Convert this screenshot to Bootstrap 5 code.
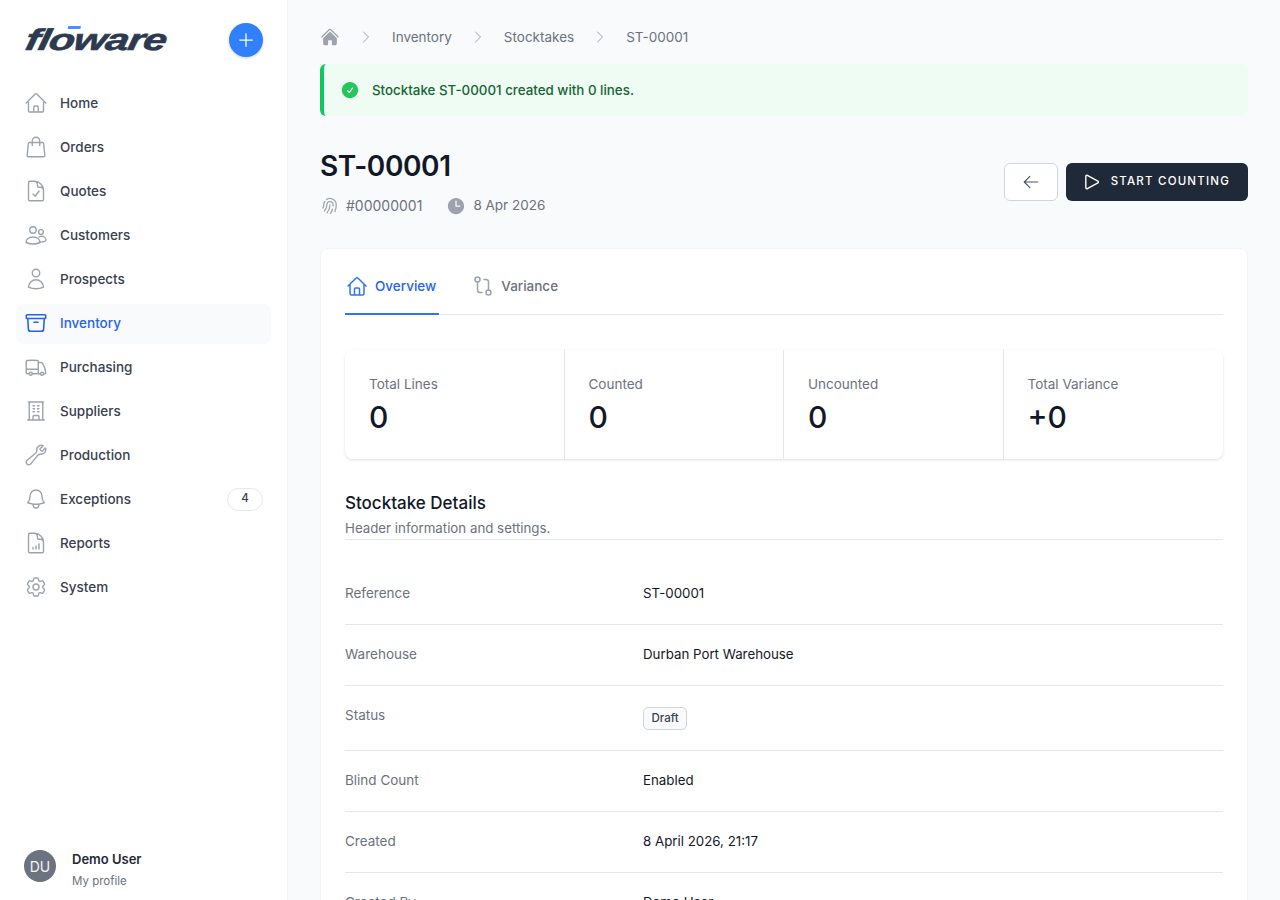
<!DOCTYPE html>
<html lang="en">
<head>
  <meta charset="UTF-8" />
  <title>ST-00001</title>
  <link href="https://cdn.jsdelivr.net/npm/bootstrap@5.3.3/dist/css/bootstrap.min.css" rel="stylesheet">
  <style>
    body { font-family: Inter, "Liberation Sans", sans-serif; font-size: 14px; color: #111827; background: #f9fafb; }
    .ico { fill: none; stroke: currentColor; stroke-width: 1.5; stroke-linecap: round; stroke-linejoin: round; flex: none; }
    .ico-solid { fill: currentColor; stroke: none; flex: none; }
    .side { width: 288px; background: #fff; border-right: 1px solid #f3f4f6; flex: none; padding: 16px 16px 0; }
    .brand-row { height: 48px; padding: 0 8px; }
    .brand { position: relative; margin-left: 2px; font-family: "Liberation Sans", sans-serif; font-weight: 700; font-style: italic; font-size: 30px; color: #2c3a4f; letter-spacing: -.8px; transform: scaleX(1.41) skewX(-8deg); transform-origin: left center; line-height: 1; -webkit-text-stroke: .6px #2c3a4f; }
    .brand-bar { position: absolute; left: 28px; top: 1px; width: 9px; height: 2.5px; background: #4f8ff7; }
    .add-btn { width: 34px; height: 34px; background: #2f80fa; color: #fff; box-shadow: 0 1px 3px rgba(0,0,0,.2); border: 0; }
    .side-nav { margin-top: 20px; gap: 4px; }
    .side-link { height: 40px; padding: 0 8px 2px; border-radius: 8px; color: #374151; font-weight: 500; font-size: 13.5px; gap: 12px; text-decoration: none; }
    .side-link svg { color: #9ca3af; width: 24px; height: 24px; stroke-width: 1.4; }
    .side-link.on { background: #f9fafb; color: #2563eb; }
    .side-link.on svg { color: #2563eb; stroke-width: 1.6; }
    .count { width: 36px; height: 23px; border: 1px solid #e5e7eb; border-radius: 12px; font-size: 11.5px; color: #374151; }
    .profile { padding: 0 8px 16px; gap: 16px; height: 48px; margin-bottom: 2px; }
    .avatar { width: 32px; height: 32px; background: #6b7280; color: #f3f4f6; font-size: 14px; }
    .who-box { padding-top: 8px; }
    .who { font-size: 13px; font-weight: 600; color: #1f2937; line-height: 20px; }
    .who-sub { font-size: 11.5px; color: #6b7280; line-height: 20px; margin-top: 2px; }
    .main-pane { padding: 24px 32px 0; min-width: 0; }
    .crumbs { height: 26px; color: #6b7280; font-size: 13.5px; gap: 18px; margin-bottom: 14px; }
    .crumbs svg { color: #9ca3af; }
    .flash { height: 52px; background: #effcf3; border-left: 4px solid #10c85a; border-radius: 6px; padding-left: 16px; gap: 12px; color: #166534; font-size: 13.35px; font-weight: 500; margin-bottom: 32px; }
    .flash svg { color: #22c55e; }
    .doc-title { font-size: 28px; font-weight: 600; line-height: 36px; letter-spacing: -.4px; color: #111827; margin: 0 0 11px; }
    .meta { color: #6b7280; font-size: 13.5px; gap: 7px; }
    .meta svg { color: #9ca3af; }
    .meta-id { font-size: 14px; margin-left: -1px; }
    .btn-back { width: 54px; height: 38px; background: #fff; border: 1px solid #d1d5db; border-radius: 6px; color: #4b5563; padding: 0; }
    .btn-start { height: 38px; background: #1f2937; color: #fff; border: 0; border-radius: 6px; font-size: 11.5px; font-weight: 500; letter-spacing: 1.2px; padding: 0 18px 0 15px; gap: 8px; }
    .btn-start:hover { background: #1f2937; color: #fff; }
    .sheet { margin-top: 32px; background: #fff; border: 1px solid #f3f4f6; border-radius: 8px; padding: 0 24px; box-shadow: 0 1px 1px rgba(0,0,0,.01); }
    .tabs { border-bottom: 1px solid #e5e7eb; gap: 32px; height: 66px; }
    .tab-item { height: 66px; margin-bottom: -1px; padding: 8px 3px 0 0; gap: 6px; color: #6b7280; font-size: 13.5px; font-weight: 500; }
    .tab-item svg { color: #9ca3af; }
    .tab-item.on { color: #2563eb; border-bottom: 2px solid #2f74f0; padding-top: 10px; }
    .tab-item.on svg { color: #2f74f0; }
    .stats { margin-top: 35px; border-radius: 8px; box-shadow: 0 1px 3px rgba(0,0,0,.12); height: 109px; }
    .stat { padding: 24px 24px 0; border-right: 1px solid #e5e7eb; }
    .stat:last-child { border-right: 0; }
    .stat-label { font-size: 13.5px; color: #6b7280; line-height: 20px; }
    .stat-num { font-size: 30px; font-weight: 500; line-height: 36px; color: #111827; margin-top: 5px; }
    .sec-head { margin-top: 32px; border-bottom: 1px solid #e5e7eb; height: 49px; }
    .sec-title { font-size: 17px; font-weight: 500; line-height: 24px; color: #111827; margin: 0; }
    .sec-sub { font-size: 13.3px; line-height: 20px; color: #6b7280; margin-top: 3px; }
    .facts { margin-top: 24px; }
    .fact { padding: 19px 0 21px; border-bottom: 1px solid #e5e7eb; font-size: 13.5px; line-height: 20px; }
    .fact-key { width: 298px; color: #6b7280; flex: none; }
    .fact-val { color: #111827; font-size: 13.3px; }
    .pill { display: block; width: fit-content; margin: 2px 0 -1px; height: 23px; padding: 0 7.5px; line-height: 21px; background: #f9fafb; border: 1px solid #d1d5db; border-radius: 5px; font-size: 11.5px; font-weight: 500; color: #374151; }
  </style>
</head>
<body>
<div class="d-flex vh-100 overflow-hidden">
  <aside class="side d-flex flex-column">
    <div class="brand-row d-flex align-items-center justify-content-between">
      <div class="brand">floware<span class="brand-bar"></span></div>
      <button class="add-btn rounded-circle d-flex align-items-center justify-content-center p-0">
        <svg class="ico" width="20" height="20" viewBox="0 0 24 24"><path d="M12 4.5v15m7.5-7.5h-15"/></svg>
      </button>
    </div>
    <nav class="side-nav d-flex flex-column flex-grow-1">
      <a class="side-link d-flex align-items-center" href="#"><svg class="ico" viewBox="0 0 24 24"><path d="m2.25 12 8.954-8.955c.44-.439 1.152-.439 1.591 0L21.75 12M4.5 9.75v10.125c0 .621.504 1.125 1.125 1.125H9.75v-4.875c0-.621.504-1.125 1.125-1.125h2.25c.621 0 1.125.504 1.125 1.125V21h4.125c.621 0 1.125-.504 1.125-1.125V9.75M8.25 21h8.25"/></svg>Home</a>
      <a class="side-link d-flex align-items-center" href="#"><svg class="ico" viewBox="0 0 24 24"><path d="M15.75 10.5V6a3.75 3.75 0 1 0-7.5 0v4.5m11.356-1.993 1.263 12c.07.665-.45 1.243-1.119 1.243H4.25a1.125 1.125 0 0 1-1.12-1.243l1.264-12A1.125 1.125 0 0 1 5.513 7.5h12.974c.576 0 1.059.435 1.119 1.007Z"/></svg>Orders</a>
      <a class="side-link d-flex align-items-center" href="#"><svg class="ico" viewBox="0 0 24 24"><path d="M10.125 2.25h-4.5c-.621 0-1.125.504-1.125 1.125v17.25c0 .621.504 1.125 1.125 1.125h12.75c.621 0 1.125-.504 1.125-1.125v-9M10.125 2.25h.375a9 9 0 0 1 9 9v.375M10.125 2.25A3.375 3.375 0 0 1 13.5 5.625v1.5c0 .621.504 1.125 1.125 1.125h1.5a3.375 3.375 0 0 1 3.375 3.375M9 15l2.25 2.25L15 12"/></svg>Quotes</a>
      <a class="side-link d-flex align-items-center" href="#"><svg class="ico" viewBox="0 0 24 24"><circle cx="9" cy="7" r="3.2"/><circle cx="17" cy="9" r="2.4"/><path d="M2 19.5c0-3.2 3-5.5 7-5.5s7 2.300 7 5.500c-2 1-4.500 1.500-7 1.500s-5-.5-7-1.500Z"/><path d="M15 14c.8-.5 1.500-.7 2.500-.7 2.500 0 4.500 1.700 4.500 4 0 1-1.500 1.700-5.800 1.700"/></svg>Customers</a>
      <a class="side-link d-flex align-items-center" href="#"><svg class="ico" viewBox="0 0 24 24"><path d="M15.750 6a3.750 3.750 0 1 1-7.500 0 3.750 3.750 0 0 1 7.500 0ZM4.501 20.118a7.500 7.500 0 0 1 14.998 0A17.933 17.933 0 0 1 12 21.750c-2.676 0-5.216-.584-7.499-1.632Z"/></svg>Prospects</a>
      <a class="side-link on d-flex align-items-center" href="#"><svg class="ico" viewBox="0 0 24 24"><path d="m20.250 7.500-.625 10.632a2.250 2.250 0 0 1-2.247 2.118H6.622a2.250 2.250 0 0 1-2.247-2.118L3.750 7.500M10 11.250h4M3.375 7.500h17.250c.621 0 1.125-.504 1.125-1.125v-1.500c0-.621-.504-1.125-1.125-1.125H3.375c-.621 0-1.125.504-1.125 1.125v1.500c0 .621.504 1.125 1.125 1.125Z"/></svg>Inventory</a>
      <a class="side-link d-flex align-items-center" href="#"><svg class="ico" viewBox="0 0 24 24"><path d="M8.250 18.750a1.500 1.500 0 0 1-3 0m3 0a1.500 1.500 0 0 0-3 0m3 0h6m-9 0H3.375a1.125 1.125 0 0 1-1.125-1.125V14.250m17.250 4.500a1.500 1.500 0 0 1-3 0m3 0a1.500 1.500 0 0 0-3 0m3 0h1.125c.621 0 1.129-.504 1.090-1.124a17.902 17.902 0 0 0-3.213-9.193 2.056 2.056 0 0 0-1.580-.860H14.250M16.500 18.750h-2.250m0-11.177v-.958c0-.568-.422-1.048-.987-1.106a48.554 48.554 0 0 0-10.026 0 1.106 1.106 0 0 0-.987 1.106v7.635m12-6.677v6.677m0 4.500v-4.500m0 0h-12"/></svg>Purchasing</a>
      <a class="side-link d-flex align-items-center" href="#"><svg class="ico" viewBox="0 0 24 24"><path d="M3.750 21h16.500M4.500 3h15M5.250 3v18m13.500-18v18M9 6.750h1.500m-1.500 3h1.500m-1.500 3h1.500m3-6H15m-1.500 3H15m-1.500 3H15M9 21v-3.375c0-.621.504-1.125 1.125-1.125h3.750c.621 0 1.125.504 1.125 1.125V21"/></svg>Suppliers</a>
      <a class="side-link d-flex align-items-center" href="#"><svg class="ico" viewBox="0 0 24 24"><path d="M21.750 6.750a4.500 4.500 0 0 1-4.884 4.484c-1.076-.091-2.264.071-2.950.904l-7.152 8.684a2.548 2.548 0 1 1-3.586-3.586l8.684-7.152c.833-.686.995-1.874.904-2.950a4.500 4.500 0 0 1 6.336-4.486l-3.276 3.276a3.004 3.004 0 0 0 2.250 2.250l3.276-3.276c.256.565.398 1.192.398 1.852Z"/></svg>Production</a>
      <a class="side-link d-flex align-items-center" href="#"><svg class="ico" viewBox="0 0 24 24"><path d="M14.857 17.082a23.848 23.848 0 0 0 5.454-1.310A8.967 8.967 0 0 1 18 9.750V9A6 6 0 0 0 6 9v.750a8.967 8.967 0 0 1-2.312 6.022c1.733.640 3.560 1.085 5.455 1.310m5.714 0a24.255 24.255 0 0 1-5.714 0m5.714 0a3 3 0 1 1-5.714 0"/></svg><span class="flex-grow-1">Exceptions</span><span class="count d-flex align-items-center justify-content-center">4</span></a>
      <a class="side-link d-flex align-items-center" href="#"><svg class="ico" viewBox="0 0 24 24"><path d="M10.125 2.250h-4.500c-.621 0-1.125.504-1.125 1.125v17.250c0 .621.504 1.125 1.125 1.125h12.750c.621 0 1.125-.504 1.125-1.125v-9M10.125 2.250h.375a9 9 0 0 1 9 9v.375M10.125 2.250A3.375 3.375 0 0 1 13.500 5.625v1.500c0 .621.504 1.125 1.125 1.125h1.500a3.375 3.375 0 0 1 3.375 3.375M9 18v-1.500M12 18v-3M15 18v-5"/></svg>Reports</a>
      <a class="side-link d-flex align-items-center" href="#"><svg class="ico" viewBox="0 0 24 24"><path d="M9.594 3.940c.090-.542.560-.940 1.110-.940h2.593c.550 0 1.020.398 1.110.940l.213 1.281c.063.374.313.686.645.870.074.040.147.083.220.127.325.196.720.257 1.075.124l1.217-.456a1.125 1.125 0 0 1 1.370.490l1.296 2.247a1.125 1.125 0 0 1-.260 1.431l-1.003.827c-.293.241-.438.613-.430.992a7.723 7.723 0 0 1 0 .255c-.008.378.137.750.430.991l1.004.827c.424.350.534.955.260 1.430l-1.298 2.247a1.125 1.125 0 0 1-1.369.491l-1.217-.456c-.355-.133-.750-.072-1.076.124a6.470 6.470 0 0 1-.220.128c-.331.183-.581.495-.644.869l-.213 1.281c-.090.543-.560.940-1.110.940h-2.594c-.550 0-1.019-.398-1.110-.940l-.213-1.281c-.062-.374-.312-.686-.644-.870a6.520 6.520 0 0 1-.220-.127c-.325-.196-.720-.257-1.076-.124l-1.217.456a1.125 1.125 0 0 1-1.369-.490l-1.297-2.247a1.125 1.125 0 0 1 .260-1.431l1.004-.827c.292-.240.437-.613.430-.991a6.932 6.932 0 0 1 0-.255c.007-.380-.138-.751-.430-.992l-1.004-.827a1.125 1.125 0 0 1-.260-1.430l1.297-2.247a1.125 1.125 0 0 1 1.370-.491l1.216.456c.356.133.751.072 1.076-.124.072-.044.146-.086.220-.128.332-.183.582-.495.644-.869l.214-1.280Z"/><path d="M15 12a3 3 0 1 1-6 0 3 3 0 0 1 6 0Z"/></svg>System</a>
    </nav>
    <div class="profile d-flex align-items-center">
      <div class="avatar rounded-circle d-flex align-items-center justify-content-center">DU</div>
      <div class="who-box">
        <div class="who">Demo User</div>
        <div class="who-sub">My profile</div>
      </div>
    </div>
  </aside>

  <main class="main-pane flex-grow-1">
    <div class="crumbs d-flex align-items-center">
      <svg class="ico-solid" width="20" height="20" viewBox="0 0 24 24"><path d="M11.470 3.841a.750.750 0 0 1 1.060 0l8.690 8.690a.750.750 0 1 0 1.060-1.061l-8.689-8.690a2.250 2.250 0 0 0-3.182 0l-8.690 8.690a.750.750 0 1 0 1.061 1.060l8.690-8.689Z"/><path d="m12 5.432 8.159 8.159c.030.030.060.058.091.086v6.198c0 1.035-.840 1.875-1.875 1.875H15a.750.750 0 0 1-.750-.750v-4.500a.750.750 0 0 0-.750-.750h-3a.750.750 0 0 0-.750.750V21a.750.750 0 0 1-.750.750H5.625a1.875 1.875 0 0 1-1.875-1.875v-6.198a2.290 2.290 0 0 0 .091-.086L12 5.432Z"/></svg>
      <svg class="ico" width="16" height="16" viewBox="0 0 24 24"><path d="m8.250 4.500 7.500 7.500-7.500 7.500"/></svg>
      <span>Inventory</span>
      <svg class="ico" width="16" height="16" viewBox="0 0 24 24"><path d="m8.250 4.500 7.500 7.500-7.500 7.500"/></svg>
      <span>Stocktakes</span>
      <svg class="ico" width="16" height="16" viewBox="0 0 24 24"><path d="m8.250 4.500 7.500 7.500-7.500 7.500"/></svg>
      <span>ST-00001</span>
    </div>

    <div class="flash d-flex align-items-center">
      <svg class="ico-solid" width="20" height="20" viewBox="0 0 24 24"><path fill-rule="evenodd" d="M2.250 12c0-5.385 4.365-9.750 9.750-9.750s9.750 4.365 9.750 9.750-4.365 9.750-9.750 9.750S2.250 17.385 2.250 12Zm13.360-1.814a.750.750 0 1 0-1.220-.872l-3.236 4.530L9.530 12.220a.750.750 0 0 0-1.060 1.060l2.250 2.250a.750.750 0 0 0 1.140-.094l3.750-5.250Z"/></svg>
      <span>Stocktake ST-00001 created with 0 lines.</span>
    </div>

    <div class="d-flex justify-content-between align-items-center">
      <div>
        <h1 class="doc-title">ST-00001</h1>
        <div class="d-flex gap-4">
          <div class="meta d-flex align-items-center">
            <svg class="ico" width="20" height="20" viewBox="0 0 24 24"><path d="M7.864 4.243A7.500 7.500 0 0 1 19.500 10.500c0 2.920-.556 5.709-1.568 8.268M5.742 6.364A7.465 7.465 0 0 0 4.500 10.500a7.464 7.464 0 0 1-1.150 3.993m1.989 3.559A11.209 11.209 0 0 0 8.250 10.500a3.750 3.750 0 1 1 7.500 0c0 .527-.021 1.049-.064 1.565M12 10.500a14.940 14.940 0 0 1-3.600 9.750m6.633-4.596a18.666 18.666 0 0 1-2.485 5.330"/></svg>
            <span class="meta-id">#00000001</span>
          </div>
          <div class="meta d-flex align-items-center">
            <svg class="ico-solid" width="20" height="20" viewBox="0 0 24 24"><path fill-rule="evenodd" d="M12 2.250c-5.385 0-9.750 4.365-9.750 9.750s4.365 9.750 9.750 9.750 9.750-4.365 9.750-9.750S17.385 2.250 12 2.250ZM12.750 6a.750.750 0 0 0-1.500 0v6c0 .414.336.750.750.750h4.500a.750.750 0 0 0 0-1.500h-3.750V6Z"/></svg>
            <span>8 Apr 2026</span>
          </div>
        </div>
      </div>
      <div class="d-flex gap-2">
        <button class="btn btn-back d-flex align-items-center justify-content-center">
          <svg class="ico" width="18" height="18" viewBox="0 0 24 24"><path d="M10.500 19.500 3 12m0 0 7.500-7.500M3 12h18"/></svg>
        </button>
        <button class="btn btn-start d-flex align-items-center">
          <svg class="ico" width="22" height="22" viewBox="0 0 24 24"><path d="M5.250 5.653c0-.856.917-1.398 1.667-.986l11.540 6.347a1.125 1.125 0 0 1 0 1.972l-11.540 6.347a1.125 1.125 0 0 1-1.667-.986V5.653Z"/></svg>
          START COUNTING
        </button>
      </div>
    </div>

    <section class="sheet">
      <div class="tabs d-flex">
        <div class="tab-item on d-flex align-items-center"><svg class="ico" width="24" height="24" viewBox="0 0 24 24"><path d="M3 12 10.900 4.200c.6-.6 1.600-.6 2.200 0L21 12M5 10v9.500c0 .8.700 1.500 1.500 1.500h11c.8 0 1.500-.7 1.500-1.500V10M9.500 21v-6c0-.6.400-1 1-1h3c.6 0 1 .4 1 1v6"/></svg>Overview</div>
        <div class="tab-item d-flex align-items-center"><svg class="ico" width="24" height="24" viewBox="0 0 24 24"><circle cx="6.500" cy="5.500" r="2.500"/><circle cx="17.500" cy="18.500" r="2.500"/><path d="M6.500 8v8c0 1.400 1 2.500 2.500 2.500h2M17.500 16V8c0-1.400-1-2.500-2.500-2.500h-2"/></svg>Variance</div>
      </div>

      <div class="stats row g-0">
        <div class="stat col-3"><div class="stat-label">Total Lines</div><div class="stat-num">0</div></div>
        <div class="stat col-3"><div class="stat-label">Counted</div><div class="stat-num">0</div></div>
        <div class="stat col-3"><div class="stat-label">Uncounted</div><div class="stat-num">0</div></div>
        <div class="stat col-3"><div class="stat-label">Total Variance</div><div class="stat-num">+0</div></div>
      </div>

      <div class="sec-head">
        <h2 class="sec-title">Stocktake Details</h2>
        <div class="sec-sub">Header information and settings.</div>
      </div>

      <div class="facts">
        <div class="fact d-flex"><div class="fact-key">Reference</div><div class="fact-val">ST-00001</div></div>
        <div class="fact d-flex"><div class="fact-key">Warehouse</div><div class="fact-val">Durban Port Warehouse</div></div>
        <div class="fact d-flex"><div class="fact-key">Status</div><div class="fact-val"><span class="pill">Draft</span></div></div>
        <div class="fact d-flex"><div class="fact-key">Blind Count</div><div class="fact-val">Enabled</div></div>
        <div class="fact d-flex"><div class="fact-key">Created</div><div class="fact-val">8 April 2026, 21:17</div></div>
        <div class="fact d-flex"><div class="fact-key">Created By</div><div class="fact-val">Demo User</div></div>
      </div>
    </section>
  </main>
</div>
<script src="https://cdn.jsdelivr.net/npm/bootstrap@5.3.3/dist/js/bootstrap.bundle.min.js"></script>
</body>
</html>
